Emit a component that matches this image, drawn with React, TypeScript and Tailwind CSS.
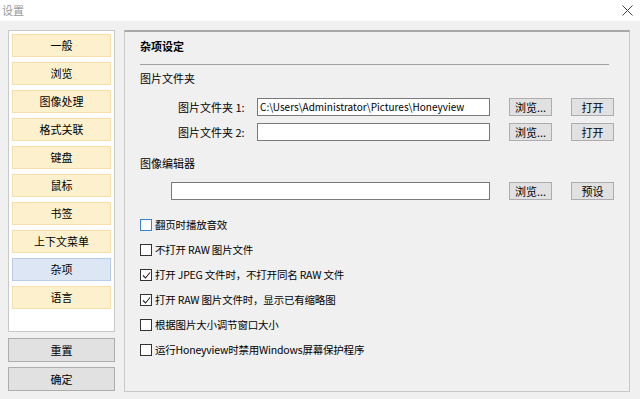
import React from "react";

const font = { fontFamily: '"Noto Sans CJK SC", "Liberation Sans", sans-serif' };

const navItems = ["一般", "浏览", "图像处理", "格式关联", "键盘", "鼠标", "书签", "上下文菜单", "杂项", "语言"];

const Btn: React.FC<{ label: string }> = ({ label }) => (
    <div className="w-[43px] h-[18px] flex items-center justify-center bg-[#e1e1e1] border border-[#adadad] text-[11px] leading-none text-black whitespace-nowrap">
        {label}
    </div>
);

const Input: React.FC<{ value?: string; className?: string }> = ({ value, className }) => (
    <div className={`h-[18px] bg-white border border-[#7a7a7a] flex items-center px-[2px] text-[10px] leading-none text-black whitespace-nowrap overflow-hidden ${className ?? ""}`}>
        {value}
    </div>
);

const Check: React.FC<{ label: string; checked?: boolean; focus?: boolean }> = ({ label, checked, focus }) => (
    <div className="h-[18px] flex items-center gap-[3px] text-[10.5px] text-black leading-none">
        <div className={`w-[12px] h-[12px] bg-white border flex items-center justify-center ${focus ? "border-[#3c82c8]" : "border-[#333]"}`}>
            {checked && (
                <svg width="9" height="9" viewBox="0 0 9 9">
                    <path d="M1 4.5 L3.5 7 L8 1.5" fill="none" stroke="#222" strokeWidth="1.1" />
                </svg>
            )}
        </div>
        <span className="whitespace-nowrap tracking-[-0.2px]">{label}</span>
    </div>
);

export default function App() {
    return (
        <div className="w-[640px] h-[399px] bg-[#f0f0f0] flex flex-col overflow-hidden" style={font}>
            {/* TITLE BAR */}
            <div className="h-[21px] bg-white flex items-center justify-between pl-[2px] pr-[7px]">
                <span className="text-[11px] text-[#999] leading-none">设置</span>
                <svg width="11" height="11" viewBox="0 0 11 11">
                    <path d="M0.5 0.5 L10.5 10.5 M10.5 0.5 L0.5 10.5" stroke="#444" strokeWidth="1" />
                </svg>
            </div>

            {/* BODY */}
            <div className="flex-1 flex pl-[8px] pt-[9px] gap-[9px]">
                {/* LEFT COLUMN */}
                <div className="w-[107px] flex flex-col">
                    <div className="h-[302px] bg-white border border-[#c8c8c8] px-[3px] pt-[3px] flex flex-col gap-[5px]">
                        {navItems.map((item) => (
                            <div
                                key={item}
                                className={`h-[23px] flex items-center justify-center text-[11px] text-black leading-none border ${
                                    item === "杂项" ? "bg-[#dce6f4] border-[#b8cbe6]" : "bg-[#fdf1cd] border-[#f5e0ac]"
                                }`}
                            >
                                {item}
                            </div>
                        ))}
                    </div>
                    <div className="mt-[6px] h-[24px] bg-[#e1e1e1] border border-[#adadad] flex items-center justify-center text-[11px] text-black">
                        重置
                    </div>
                    <div className="mt-[5px] h-[24px] bg-[#e1e1e1] border border-[#adadad] flex items-center justify-center text-[11px] text-black">
                        确定
                    </div>
                </div>

                {/* RIGHT PANEL */}
                <div className="w-[506px] h-[362px] border border-[#c8c8c8] border-t-[#a8a8a8] border-t-2 pl-[15px] flex flex-col">
                    <div className="mt-[5px] h-[18px] flex items-center text-[11px] font-bold text-black">杂项设定</div>
                    <div className="mt-[9px] mr-[20px] h-px bg-[#a0a0a0]"></div>
                    <div className="mt-[4px] h-[18px] flex items-center text-[11px] text-black">图片文件夹</div>

                    <div className="mt-[11px] flex items-center">
                        <span className="w-[117px] pl-[38px] text-[11px] text-black whitespace-nowrap">图片文件夹 1:</span>
                        <Input className="w-[233px]" value="C:\Users\Administrator\Pictures\Honeyview" />
                        <div className="ml-[19px]"><Btn label="浏览..." /></div>
                        <div className="ml-[19px]"><Btn label="打开" /></div>
                    </div>
                    <div className="mt-[7px] flex items-center">
                        <span className="w-[117px] pl-[38px] text-[11px] text-black whitespace-nowrap">图片文件夹 2:</span>
                        <Input className="w-[233px]" />
                        <div className="ml-[19px]"><Btn label="浏览..." /></div>
                        <div className="ml-[19px]"><Btn label="打开" /></div>
                    </div>

                    <div className="mt-[13px] h-[18px] flex items-center text-[11px] text-black">图像编辑器</div>
                    <div className="mt-[10px] flex items-center pl-[31px]">
                        <Input className="w-[319px]" />
                        <div className="ml-[19px]"><Btn label="浏览..." /></div>
                        <div className="ml-[19px]"><Btn label="预设" /></div>
                    </div>

                    <div className="mt-[16px] flex flex-col gap-[7px]">
                        <Check label="翻页时播放音效" focus />
                        <Check label="不打开 RAW 图片文件" />
                        <Check label="打开 JPEG 文件时，不打开同名 RAW 文件" checked />
                        <Check label="打开 RAW 图片文件时，显示已有缩略图" checked />
                        <Check label="根据图片大小调节窗口大小" />
                        <Check label="运行Honeyview时禁用Windows屏幕保护程序" />
                    </div>
                </div>
            </div>
        </div>
    );
}
